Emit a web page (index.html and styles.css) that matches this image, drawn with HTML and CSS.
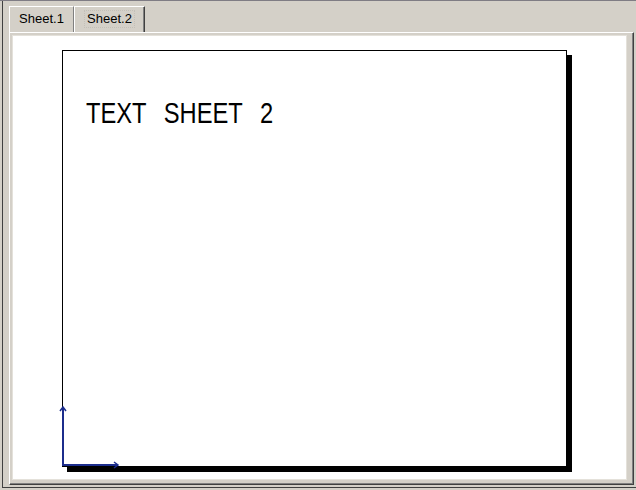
FILE: index.html
```html
<!DOCTYPE html>
<html lang="en">
<head>
    <meta charset="UTF-8">
    <title>Sheet 2</title>
    <link rel="stylesheet" href="styles.css">
</head>
<body>

    <div class="window">
        <div class="frame">
            <div class="tabs">
                <div class="tab">Sheet.1</div>
                <div class="tab active"><span class="focus">Sheet.2</span></div>
            </div>

            <div class="panel">
                <div class="view">
                    <div class="page">
                        <div class="title">TEXT SHEET 2</div>

                        <!-- UCS axes in the lower left corner -->
                        <svg class="axes" width="64" height="65" viewBox="0 0 64 65">
                            <line x1="4" y1="3" x2="4" y2="62" />
                            <line x1="3" y1="61" x2="59" y2="61" />
                            <polyline points="1,7 4,3 7,7" />
                            <polyline points="55,58 59,61 55,64" />
                        </svg>
                    </div>
                </div>
            </div>
        </div>
    </div>

</body>
</html>
```

FILE: styles.css
```css
html, body {
    margin: 0;
    padding: 0;
    width: 636px;
    height: 490px;
    overflow: hidden;
    background: #d4d0c8;
    font-family: "Liberation Sans", Arial, sans-serif;
}
.window {
    height: 490px;
    box-sizing: border-box;
    border-top: 1px solid #7f7c84;
    padding-left: 2px;
}
.frame {
    height: 487px;
    box-sizing: border-box;
    border-left: 1px solid #404040;
    border-bottom: 1px solid #404040;
    padding: 5px 0 0 6px;
}
.tabs {
    display: flex;
    height: 26px;
}
.tab {
    box-sizing: border-box;
    height: 26px;
    width: 65px;
    padding-top: 4px;
    border-top: 1px solid #fff;
    border-left: 1px solid #fff;
    border-right: 1px solid #808080;
    font-size: 13px;
    line-height: 16px;
    color: #000;
    text-align: center;
}
.tab.active {
    width: 71px;
    border-right: 1px solid #404040;
    box-shadow: inset -1px 0 #808080;
}
.focus {
    display: inline-block;
    padding: 0 2px;
    outline: 1px dotted #c4c0b8;
}
.panel {
    width: 625px;
    height: 453px;
    box-sizing: border-box;
    border: 1px solid;
    border-color: #fff #404040 #404040 #fff;
    box-shadow: inset -1px -1px #808080;
    padding: 2px 6px 4px 2px;
}
.view {
    height: 100%;
    box-sizing: border-box;
    background: #fff;
    border: 1px solid #e4e1da;
    padding: 14px 0 0 49px;
}
.page {
    position: relative;
    width: 505px;
    height: 417px;
    box-sizing: border-box;
    background: #fff;
    border: 1px solid #000;
    box-shadow: 5px 5px 0 #000;
}
.title {
    display: inline-block;
    margin: 47px 0 0 23px;
    font-size: 30px;
    line-height: 30px;
    word-spacing: 14px;
    white-space: nowrap;
    color: #000;
    transform: scaleX(0.79);
    transform-origin: 0 0;
}
.axes {
    position: absolute;
    left: -4px;
    top: 353px;
    fill: none;
    stroke: #1c2d8c;
    stroke-width: 2;
}
.axes polyline {
    stroke-width: 1.5;
}
```
